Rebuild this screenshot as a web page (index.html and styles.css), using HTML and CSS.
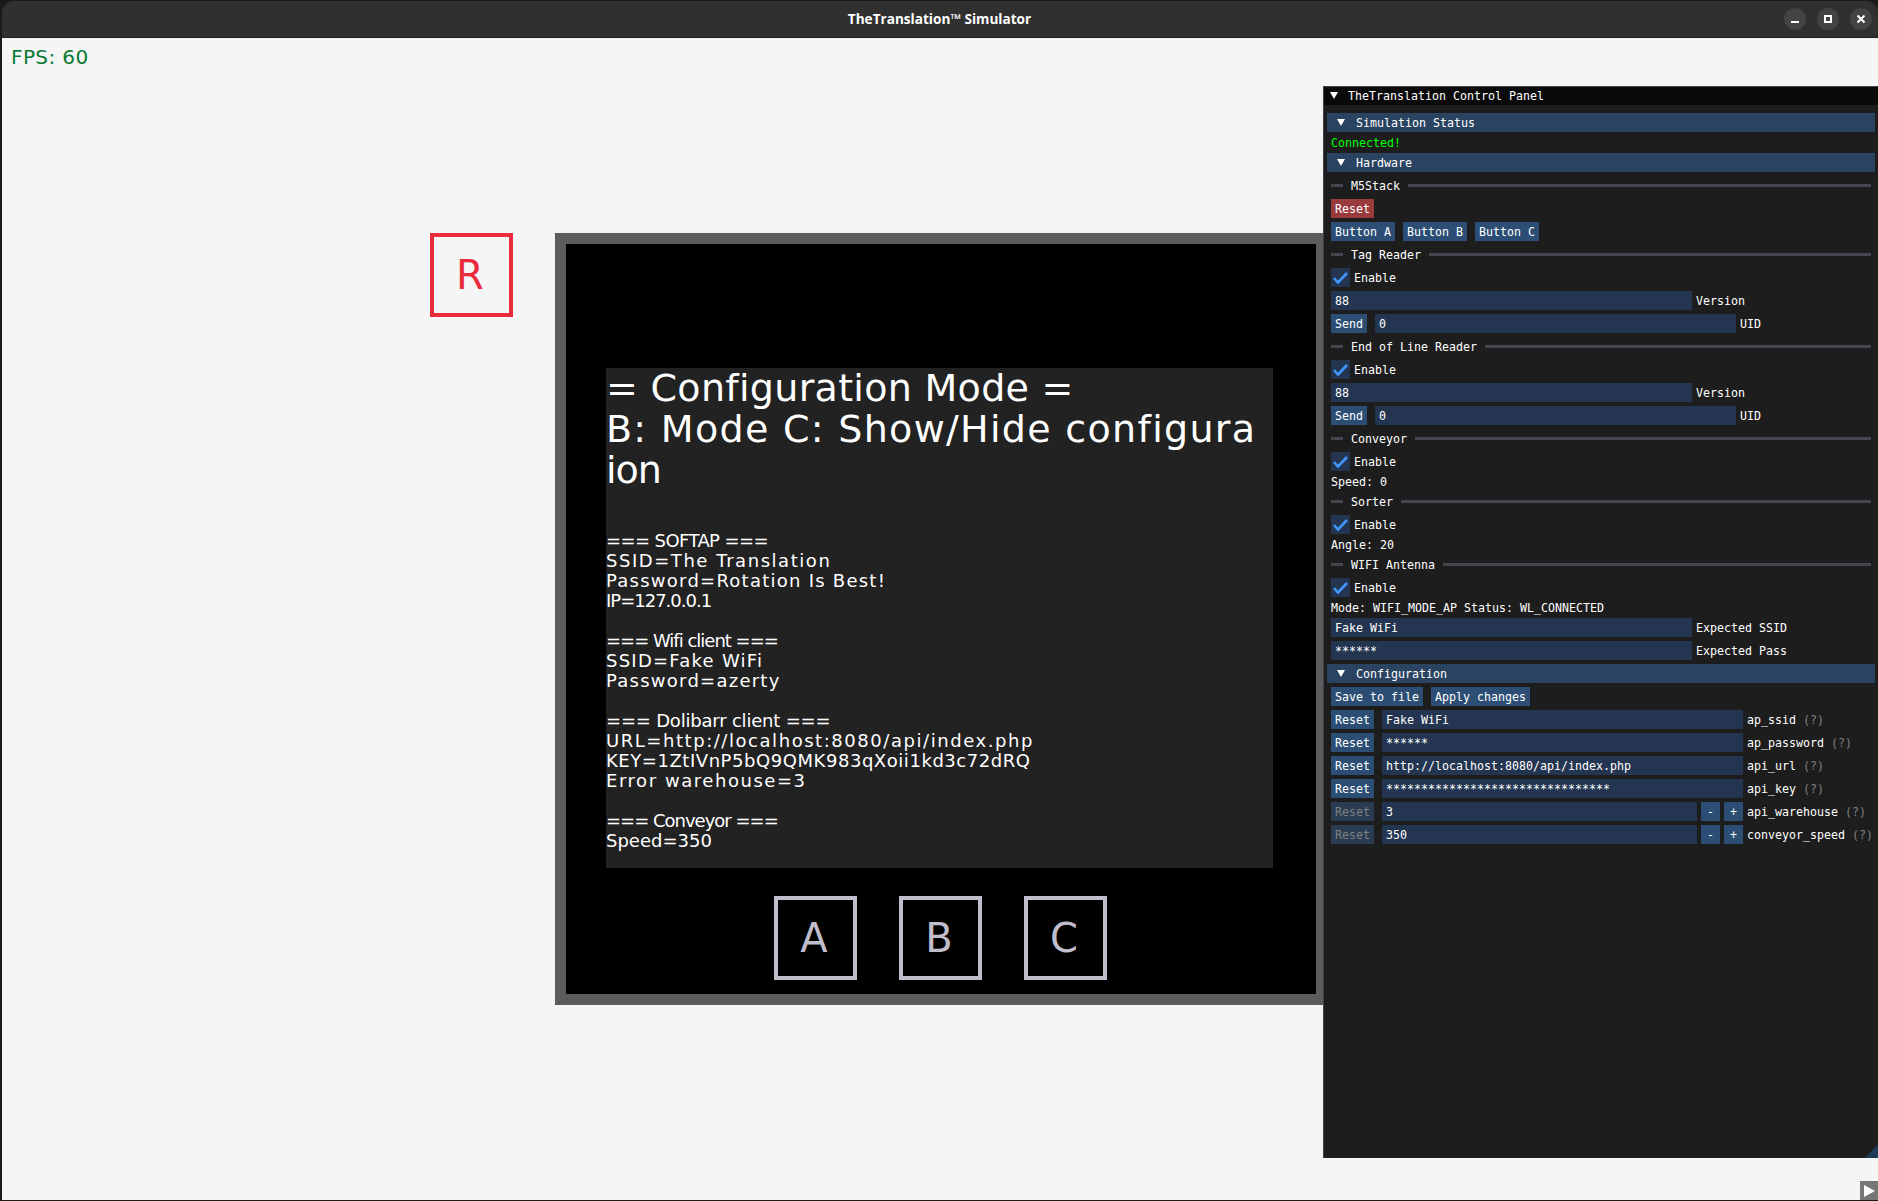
FILE: index.html
```html
<!DOCTYPE html>
<html>
<head>
	<title>TheTranslation Simulator</title>
	<meta charset="utf-8">
	<link rel="stylesheet" href="styles.css">
</head>
<body>

<div class="window">
	<div class="titlebar">
		<span class="titlebar-name">TheTranslation™ Simulator</span>
		<div class="titlebar-btns">
			<span class="wm-btn"><svg width="10" height="10" viewBox="0 0 10 10"><rect x="1" y="7" width="8" height="2" fill="#fff"/></svg></span>
			<span class="wm-btn"><svg width="10" height="10" viewBox="0 0 10 10"><rect x="2" y="2" width="6" height="6" fill="none" stroke="#fff" stroke-width="2"/></svg></span>
			<span class="wm-btn"><svg width="10" height="10" viewBox="0 0 10 10"><path d="M1.5 1.5l7 7M8.5 1.5l-7 7" fill="none" stroke="#fff" stroke-width="2"/></svg></span>
		</div>
	</div>

	<div class="sim">
		<div class="fps">FPS: 60</div>
		<div class="keybox keybox-reset">R</div>

		<div class="device">
			<div class="screen">
				<div class="screen-big">
					<div class="big1">= Configuration Mode =</div>
					<div class="big2">B: Mode C: Show/Hide configura</div>
					<div class="big3">ion</div>
				</div>
				<div class="screen-small">
					<div class="blank"></div>
					<div class="blank"></div>
					<div class="narrow-2">=== SOFTAP ===</div>
					<div class="wide-4">SSID=The Translation</div>
					<div class="wide-3">Password=Rotation Is Best!</div>
					<div class="narrow-3">IP=127.0.0.1</div>
					<div class="blank"></div>
					<div class="narrow-3">=== Wifi client ===</div>
					<div class="wide-3">SSID=Fake WiFi</div>
					<div class="wide-3">Password=azerty</div>
					<div class="blank"></div>
					<div class="narrow-1">=== Dolibarr client ===</div>
					<div class="wide-4">URL=http://localhost:8080/api/index.php</div>
					<div class="wide-1">KEY=1ZtIVnP5bQ9QMK983qXoii1kd3c72dRQ</div>
					<div class="wide-4">Error warehouse=3</div>
					<div class="blank"></div>
					<div class="narrow-3">=== Conveyor ===</div>
					<div>Speed=350</div>
				</div>
			</div>
			<div class="keys">
				<div class="keybox">A</div>
				<div class="keybox">B</div>
				<div class="keybox">C</div>
			</div>
		</div>

		<div class="panel">
			<div class="panel-title"><i class="tri"></i>TheTranslation Control Panel</div>
			<div class="panel-body">
				<div class="header"><i class="tri"></i>Simulation Status</div>
				<div class="text connected">Connected!</div>

				<div class="header"><i class="tri"></i>Hardware</div>
				<div class="sep"><span>M5Stack</span></div>
				<div class="row"><span class="btn btn-red">Reset</span></div>
				<div class="row">
					<span class="btn">Button A</span>
					<span class="btn">Button B</span>
					<span class="btn">Button C</span>
				</div>

				<div class="sep"><span>Tag Reader</span></div>
				<div class="check"><i class="box"><svg width="19" height="19" viewBox="0 0 19 19"><path d="M3 10l4 4.5L16 5" fill="none" stroke="#4296fa" stroke-width="2.6"/></svg></i><span>Enable</span></div>
				<div class="row row-label"><span class="input">88</span><span class="label">Version</span></div>
				<div class="row row-label"><span class="btn">Send</span><span class="input">0</span><span class="label">UID</span></div>

				<div class="sep"><span>End of Line Reader</span></div>
				<div class="check"><i class="box"><svg width="19" height="19" viewBox="0 0 19 19"><path d="M3 10l4 4.5L16 5" fill="none" stroke="#4296fa" stroke-width="2.6"/></svg></i><span>Enable</span></div>
				<div class="row row-label"><span class="input">88</span><span class="label">Version</span></div>
				<div class="row row-label"><span class="btn">Send</span><span class="input">0</span><span class="label">UID</span></div>

				<div class="sep"><span>Conveyor</span></div>
				<div class="check"><i class="box"><svg width="19" height="19" viewBox="0 0 19 19"><path d="M3 10l4 4.5L16 5" fill="none" stroke="#4296fa" stroke-width="2.6"/></svg></i><span>Enable</span></div>
				<div class="text">Speed: 0</div>

				<div class="sep"><span>Sorter</span></div>
				<div class="check"><i class="box"><svg width="19" height="19" viewBox="0 0 19 19"><path d="M3 10l4 4.5L16 5" fill="none" stroke="#4296fa" stroke-width="2.6"/></svg></i><span>Enable</span></div>
				<div class="text">Angle: 20</div>

				<div class="sep"><span>WIFI Antenna</span></div>
				<div class="check"><i class="box"><svg width="19" height="19" viewBox="0 0 19 19"><path d="M3 10l4 4.5L16 5" fill="none" stroke="#4296fa" stroke-width="2.6"/></svg></i><span>Enable</span></div>
				<div class="text">Mode: WIFI_MODE_AP Status: WL_CONNECTED</div>
				<div class="row row-label"><span class="input">Fake WiFi</span><span class="label">Expected SSID</span></div>
				<div class="row row-label"><span class="input">******</span><span class="label">Expected Pass</span></div>

				<div class="header"><i class="tri"></i>Configuration</div>
				<div class="row">
					<span class="btn">Save to file</span>
					<span class="btn">Apply changes</span>
				</div>
				<div class="row row-label"><span class="btn">Reset</span><span class="input">Fake WiFi</span><span class="label">ap_ssid <em>(?)</em></span></div>
				<div class="row row-label"><span class="btn">Reset</span><span class="input">******</span><span class="label">ap_password <em>(?)</em></span></div>
				<div class="row row-label"><span class="btn">Reset</span><span class="input">http://localhost:8080/api/index.php</span><span class="label">api_url <em>(?)</em></span></div>
				<div class="row row-label"><span class="btn">Reset</span><span class="input">********************************</span><span class="label">api_key <em>(?)</em></span></div>
				<div class="row row-label"><span class="btn btn-off">Reset</span><span class="input input-num">3</span><span class="step">-</span><span class="step">+</span><span class="label">api_warehouse <em>(?)</em></span></div>
				<div class="row row-label"><span class="btn btn-off">Reset</span><span class="input input-num">350</span><span class="step">-</span><span class="step">+</span><span class="label">conveyor_speed <em>(?)</em></span></div>
			</div>
			<div class="grip"></div>
		</div>

		<div class="corner"><svg width="14" height="14" viewBox="0 0 14 14"><path d="M2 1l11 6-11 6z" fill="#fff"/></svg></div>
	</div>
</div>

</body>
</html>
```

FILE: styles.css
```css
* {
	box-sizing: border-box;
}
html,
body {
	margin: 0;
	height: 100%;
}
body {
	padding: 1px 0 1px 2px;
	background: #1a1a1a;
	overflow: hidden;
}
.window {
	height: 100%;
	display: flex;
	flex-direction: column;
}

/* window title */
.titlebar {
	position: relative;
	flex: none;
	height: 37px;
	display: flex;
	align-items: center;
	justify-content: center;
	padding: 0 1px 2px 0;
	background: #303030;
	border-bottom: 1px solid #1e1e1e;
	border-radius: 12px 12px 0 0;
	color: #fff;
	font: 700 13.6px "Open Sans", sans-serif;
}
.titlebar-btns {
	position: absolute;
	top: 7px;
	right: 6px;
	display: flex;
	gap: 11px;
}
.wm-btn {
	width: 22px;
	height: 22px;
	display: flex;
	align-items: center;
	justify-content: center;
	border-radius: 50%;
	background: #444;
}

/* simulator canvas */
.sim {
	position: relative;
	flex: 1;
	background: #f5f5f5;
	overflow: hidden;
}
.fps {
	position: absolute;
	left: 9px;
	top: 7px;
	color: #0a7a35;
	font: 20px/24px "DejaVu Sans", sans-serif;
	letter-spacing: 0.4px;
}
.keybox {
	flex: none;
	width: 83px;
	height: 84px;
	display: flex;
	align-items: center;
	justify-content: center;
	padding-right: 3px;
	border: 4px solid #c0bdcc;
	color: #c0bdcc;
	font: 40px/1 "DejaVu Sans", sans-serif;
}
.keybox-reset {
	position: absolute;
	left: 428px;
	top: 195px;
	border-color: #e92b3c;
	color: #e92b3c;
}
.device {
	position: absolute;
	left: 553px;
	top: 195px;
	width: 772px;
	height: 772px;
	display: flex;
	flex-direction: column;
	align-items: center;
	gap: 28px;
	padding: 124px 3px 0 0;
	border: 11px solid #5c5c5c;
	background: #000;
}
.screen {
	width: 667px;
	height: 500px;
	background: #222;
	color: #fff;
	font-family: "DejaVu Sans", sans-serif;
}
.screen-big {
	font-size: 38px;
	line-height: 41px;
}
.big1 {
	letter-spacing: 0.3px;
}
.big2 {
	letter-spacing: 1.3px;
}
.big3 {
	letter-spacing: -1px;
}
.screen-small {
	font-size: 18px;
	line-height: 20px;
}
.blank {
	height: 20px;
}
/* the device font is not proportional like ours, so lines are fitted by hand */
.narrow-3 {
	letter-spacing: -1px;
}
.narrow-2 {
	letter-spacing: -0.6px;
}
.narrow-1 {
	letter-spacing: -0.2px;
}
.wide-1 {
	letter-spacing: 0.55px;
}
.wide-3 {
	letter-spacing: 1.25px;
}
.wide-4 {
	letter-spacing: 1.55px;
}
.keys {
	display: flex;
	gap: 42px;
	margin-left: 2px;
}

/* control panel */
.panel {
	position: absolute;
	left: 1321px;
	top: 48px;
	width: 555px;
	height: 1072px;
	background: #1d1d1d;
	border-top: 1px solid #43434f;
	border-left: 1px solid #43434f;
	color: #fff;
	font: 11.63px/13px "DejaVu Sans Mono", monospace;
}
.panel-title {
	height: 18px;
	display: flex;
	align-items: center;
	padding-left: 24px;
	position: relative;
	background: #0a0a0a;
}
.panel-body {
	display: flex;
	flex-direction: column;
	gap: 4px;
	padding: 8px 7px 0;
}
.tri {
	position: absolute;
	left: 6px;
	top: 5px;
	border-style: solid;
	border-width: 7px 4.5px 0;
	border-color: #fff transparent transparent;
}
.header {
	position: relative;
	height: 19px;
	margin: 0 -4px;
	padding: 4px 0 0 29px;
	background: #294361;
}
.header .tri {
	left: 10px;
	top: 6px;
}
.text {
	height: 13px;
	padding-top: 1px;
}
.connected {
	color: #0f0;
}
.sep {
	height: 19px;
	display: flex;
	align-items: center;
	gap: 8px;
}
.sep span {
	padding-top: 2px;
}
.sep:before,
.sep:after {
	content: "";
	height: 3px;
	background: #45454e;
}
.sep:before {
	width: 12px;
}
.sep:after {
	flex: 1;
}
.row {
	display: flex;
	gap: 8px;
}
.row-label {
	gap: 4px;
}
.row-label .btn {
	margin-right: 4px;
}
.row > * {
	flex: none;
}
.label {
	padding-top: 4px;
	white-space: pre;
}
.btn,
.input,
.step {
	height: 19px;
	padding: 4px 4px 0;
}
.btn {
	background: #2c4e75;
}
.btn-red {
	background: #993a3d;
}
.btn-off {
	background: #2a3c52;
	color: #808080;
}
.input {
	width: 361px;
	background: #233550;
}
.input-num {
	width: 315px;
}
.step {
	width: 19px;
	padding-left: 0;
	padding-right: 0;
	text-align: center;
	background: #2c4e75;
}
em {
	font-style: normal;
	color: #808080;
}
.check {
	height: 19px;
	display: flex;
	align-items: center;
	gap: 4px;
}
.check span {
	padding-top: 2px;
}
.box {
	width: 19px;
	height: 19px;
	display: block;
	background: #233550;
}
.box svg {
	display: block;
}
.grip {
	position: absolute;
	right: 0;
	bottom: 0;
	width: 13px;
	height: 13px;
	background: linear-gradient(135deg, transparent 50%, #1f3a58 50%);
}
.corner {
	position: absolute;
	right: 0;
	bottom: 0;
	width: 18px;
	height: 19px;
	display: flex;
	align-items: center;
	justify-content: center;
	background: #777;
}
```
